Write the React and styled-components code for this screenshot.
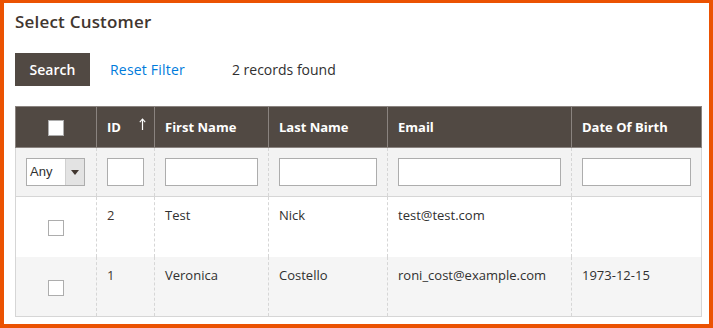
import React from "react";
import styled, { createGlobalStyle } from "styled-components";

const GlobalStyle = createGlobalStyle`
  html, body {
    margin: 0;
    padding: 0;
    background: #fff;
  }
  * {
    box-sizing: border-box;
  }
`;

const Frame = styled.div`
  width: 713px;
  height: 328px;
  border: 4px solid #eb5202;
  border-top-width: 3px;
  padding: 7px 8px 0 11px;
  font-family: "Open Sans", "Liberation Sans", sans-serif;
  color: #303030;
  overflow: hidden;
`;

const Title = styled.h1`
  margin: 0;
  font-size: 17px;
  line-height: 23px;
  font-weight: 600;
  letter-spacing: 0.2px;
  color: #41362f;
`;

const Toolbar = styled.div`
  display: flex;
  align-items: center;
  margin-top: 20px;
  height: 33px;
`;

const Button = styled.button`
  height: 33px;
  width: 75px;
  padding: 0;
  border: none;
  background: #514943;
  color: #fff;
  font-family: inherit;
  font-size: 14px;
  font-weight: 600;
`;

const Link = styled.a`
  margin-left: 20px;
  color: #007bdb;
  font-size: 14px;
  letter-spacing: 0.2px;
  text-decoration: none;
`;

const Count = styled.span`
  margin-left: 47px;
  font-size: 14px;
  color: #303030;
`;

const Table = styled.table`
  margin-top: 20px;
  width: 686px;
  border-collapse: collapse;
  table-layout: fixed;
  font-size: 13px;
`;

const Th = styled.th`
  height: 41px;
  background: #514943;
  color: #fff;
  font-weight: 700;
  font-size: 13px;
  text-align: ${(p) => (p.center ? "center" : "left")};
  padding: 0 10px;
  border: 1px solid #8a837f;
  position: relative;
`;

const FilterRow = styled.tr`
  background: #f3f3f3;
  border-bottom: 1px solid #d6d6d6;
`;

const Td = styled.td`
  border-left: 1px dashed #d6d6d6;
  border-right: 1px dashed #d6d6d6;
  padding: ${(p) => (p.filter || p.center ? "0 10px" : "9px 10px 0")};
  height: ${(p) => (p.filter ? "49px" : "60px")};
  vertical-align: ${(p) => (p.filter || p.center ? "middle" : "top")};
  text-align: ${(p) => (p.center ? "center" : "left")};
  line-height: 18px;
  &:first-child {
    border-left: 1px solid #d6d6d6;
  }
  &:last-child {
    border-right: 1px solid #d6d6d6;
  }
`;

const Row = styled.tr`
  background: ${(p) => (p.alt ? "#f5f5f5" : "#fff")};
  border-bottom: ${(p) => (p.last ? "1px solid #d6d6d6" : "none")};
`;

const Check = styled.span`
  display: inline-block;
  width: 16px;
  height: 16px;
  background: #fff;
  border: 1px solid #adadad;
  vertical-align: middle;
`;

const Input = styled.div`
  height: 28px;
  width: 100%;
  background: #fff;
  border: 1px solid #adadad;
`;

const Select = styled.div`
  display: flex;
  height: 28px;
  width: 59px;
  background: #fff;
  border: 1px solid #adadad;
  font-size: 13px;
  line-height: 26px;
`;

const SelectText = styled.span`
  flex: 1;
  padding-left: 3px;
  font-family: "Liberation Sans", sans-serif;
  color: #303030;
`;

const SelectArrow = styled.span`
  width: 19px;
  background: #e3e3e3;
  border-left: 1px solid #d0d0d0;
  display: flex;
  align-items: center;
  justify-content: center;
`;

const SortIcon = styled.svg`
  position: absolute;
  left: 42px;
  top: 11px;
`;

const IdCell = styled(Td)`
  color: #41362f;
`;

const columns = [81, 58, 114, 119, 184, 130];

const rows = [
  { id: 2, first: "Test", last: "Nick", email: "test@test.com", dob: "" },
  {
    id: 1,
    first: "Veronica",
    last: "Costello",
    email: "roni_cost@example.com",
    dob: "1973-12-15",
  },
];

export default function App() {
  return (
    <Frame>
      <GlobalStyle />
      <Title>Select Customer</Title>
      <Toolbar>
        <Button>Search</Button>
        <Link href="#">Reset Filter</Link>
        <Count>2 records found</Count>
      </Toolbar>
      <Table>
        <colgroup>
          {columns.map((w, i) => (
            <col key={i} style={{ width: w }} />
          ))}
        </colgroup>
        <thead>
          <tr>
            <Th center>
              <Check />
            </Th>
            <Th>
              ID
              <SortIcon width="7" height="12" viewBox="0 0 7 12">
                <path d="M3.5 1.5V12" stroke="#fff" strokeWidth="1.2" fill="none" />
                <path d="M0.8 4.2L3.5 1L6.2 4.2" stroke="#fff" strokeWidth="1.1" fill="none" />
              </SortIcon>
            </Th>
            <Th>First Name</Th>
            <Th>Last Name</Th>
            <Th>Email</Th>
            <Th>Date Of Birth</Th>
          </tr>
        </thead>
        <tbody>
          <FilterRow>
            <Td filter>
              <Select>
                <SelectText>Any</SelectText>
                <SelectArrow>
                  <svg width="8" height="5" viewBox="0 0 8 5">
                    <path d="M0 0H8L4 5Z" fill="#41362f" />
                  </svg>
                </SelectArrow>
              </Select>
            </Td>
            <Td filter>
              <Input />
            </Td>
            <Td filter>
              <Input />
            </Td>
            <Td filter>
              <Input />
            </Td>
            <Td filter>
              <Input />
            </Td>
            <Td filter>
              <Input />
            </Td>
          </FilterRow>
          {rows.map((r, i) => (
            <Row key={r.id} alt={i % 2 === 1} last={i === rows.length - 1}>
              <Td center>
                <Check />
              </Td>
              <IdCell>{r.id}</IdCell>
              <Td>{r.first}</Td>
              <Td>{r.last}</Td>
              <Td>{r.email}</Td>
              <Td>{r.dob}</Td>
            </Row>
          ))}
        </tbody>
      </Table>
    </Frame>
  );
}
